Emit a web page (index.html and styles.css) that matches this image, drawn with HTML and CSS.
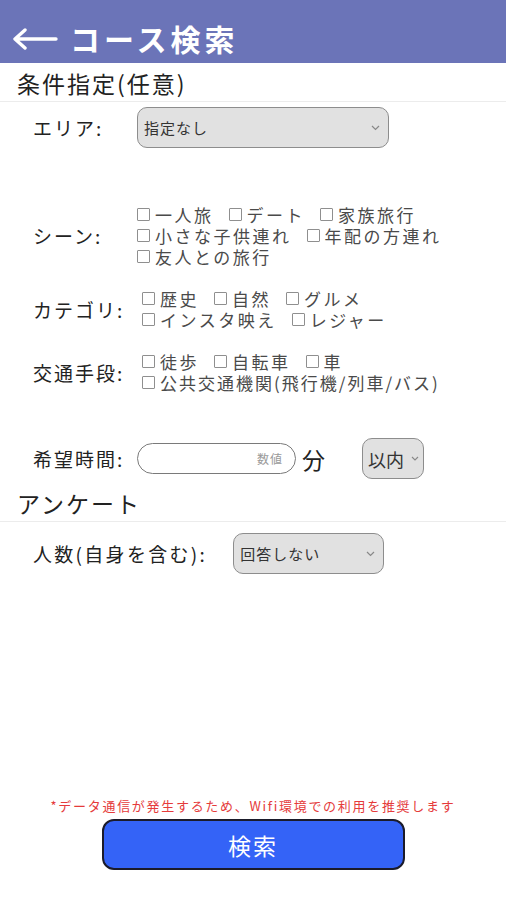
FILE: index.html
```html
<!DOCTYPE html>
<html lang="ja">
<head>
<meta charset="utf-8">
<title>コース検索</title>
<link rel="stylesheet" href="styles.css">
</head>
<body>
<div class="page">
  <header class="header">
    <svg class="back" width="46" height="22" viewBox="0 0 46 22"><path d="M44 11H4M13 2L3 11L13 20" fill="none" stroke="#fff" stroke-width="3.4" stroke-linecap="round" stroke-linejoin="round"/></svg>
    <h1 class="title">コース検索</h1>
  </header>

  <div class="section-title">条件指定(任意)</div>

  <div class="row row-area">
    <div class="label w104">エリア:</div>
    <div class="select select-area"><span>指定なし</span><svg class="chev" width="9" height="6" viewBox="0 0 9 6"><path d="M1 1l3.5 3.5L8 1" fill="none" stroke="#888" stroke-width="1.2"/></svg></div>
  </div>

  <div class="row row-scene">
    <div class="label w104">シーン:</div>
    <div class="checks">
      <div class="line"><span class="cb"><i class="box"></i>一人旅</span><span class="cb"><i class="box"></i>デート</span><span class="cb"><i class="box"></i>家族旅行</span></div>
      <div class="line"><span class="cb"><i class="box"></i>小さな子供連れ</span><span class="cb"><i class="box"></i>年配の方連れ</span></div>
      <div class="line"><span class="cb"><i class="box"></i>友人との旅行</span></div>
    </div>
  </div>

  <div class="row row-cat">
    <div class="label w109">カテゴリ:</div>
    <div class="checks">
      <div class="line"><span class="cb"><i class="box"></i>歴史</span><span class="cb"><i class="box"></i>自然</span><span class="cb"><i class="box"></i>グルメ</span></div>
      <div class="line"><span class="cb"><i class="box"></i>インスタ映え</span><span class="cb"><i class="box"></i>レジャー</span></div>
    </div>
  </div>

  <div class="row row-cat">
    <div class="label w109">交通手段:</div>
    <div class="checks">
      <div class="line"><span class="cb"><i class="box"></i>徒歩</span><span class="cb"><i class="box"></i>自転車</span><span class="cb"><i class="box"></i>車</span></div>
      <div class="line"><span class="cb tight"><i class="box"></i>公共交通機関(飛行機/列車/バス)</span></div>
    </div>
  </div>

  <div class="row row-time">
    <div class="label w104">希望時間:</div>
    <div class="input"><span>数値</span></div>
    <div class="unit">分</div>
    <div class="select select-within"><span>以内</span><svg class="chev" width="8" height="5" viewBox="0 0 8 5"><path d="M1 1l3 3l3-3" fill="none" stroke="#888" stroke-width="1.1"/></svg></div>
  </div>

  <div class="section-title survey">アンケート</div>

  <div class="row row-people">
    <div class="label people-label">人数(自身を含む):</div>
    <div class="select select-people"><span>回答しない</span><svg class="chev" width="9" height="6" viewBox="0 0 9 6"><path d="M1 1l3.5 3.5L8 1" fill="none" stroke="#888" stroke-width="1.2"/></svg></div>
  </div>

  <footer class="footer">
    <p class="note">*データ通信が発生するため、Wifi環境での利用を推奨します</p>
    <button class="search">検索</button>
  </footer>
</div>
</body>
</html>
```

FILE: styles.css
```css
* { box-sizing: border-box; }
html, body { margin: 0; padding: 0; background: #fff; }
body {
  font-family: "Noto Sans CJK JP", "Noto Sans", sans-serif;
  color: #222;
}
.page {
  width: 506px;
  min-height: 900px;
  display: flex;
  flex-direction: column;
}
.header {
  height: 63px;
  background: #6b74b8;
  display: flex;
  align-items: center;
  padding: 12px 0 0 12px;
}
.back { flex: none; margin-right: 12px; margin-top: 2px; }
.title {
  margin: 0;
  color: #fff;
  font-size: 30px;
  font-weight: 700;
  letter-spacing: 4px;
  line-height: 1.2;
}
.section-title {
  height: 39px;
  padding: 2px 0 0 17px;
  font-size: 23px;
  letter-spacing: 2px;
  line-height: 36px;
  color: #222;
  border-bottom: 1px solid #ececec;
}
.survey { margin-top: 4px; }
.row {
  display: flex;
  align-items: center;
  padding-left: 33px;
}
.label {
  flex: none;
  font-size: 19px;
  letter-spacing: 2px;
  color: #222;
}
.w104 { width: 104px; }
.w109 { width: 109px; }
.people-label { margin-right: 26px; letter-spacing: 2.3px; }
.row-area { margin-top: 5px; }
.row-scene { margin-top: 56px; }
.row-cat { margin-top: 21px; }
.row-time { margin-top: 45px; }
.row-people { margin-top: 11px; }

.select {
  height: 41px;
  display: flex;
  align-items: center;
  background: #e1e1e1;
  border: 1px solid #8d8d8d;
  border-radius: 10px;
  padding: 0 8px 0 6px;
  font-size: 15px;
  letter-spacing: 1px;
  color: #333;
}
.select .chev { margin-left: auto; flex: none; }
.select-area { width: 252px; }
.select-people { width: 151px; }
.select-within {
  width: 62px;
  margin-left: 37px;
  padding: 0 4px 0 5px;
  font-size: 18px;
  letter-spacing: 0;
}

.checks { display: flex; flex-direction: column; }
.line {
  display: flex;
  gap: 15px;
  height: 21px;
  align-items: center;
}
.cb {
  display: flex;
  align-items: center;
  height: 21px;
  font-size: 17px;
  letter-spacing: 2.5px;
  color: #4a4a4a;
  line-height: 21px;
  white-space: nowrap;
}
.cb.tight { letter-spacing: 2px; }
.box {
  display: block;
  width: 13px;
  height: 13px;
  border: 1px solid #8f8f8f;
  border-radius: 1px;
  margin-right: 5px;
  flex: none;
}

.input {
  width: 159px;
  height: 31px;
  border: 1px solid #7a7a7a;
  border-radius: 16px;
  background: #fff;
  display: flex;
  align-items: center;
  justify-content: flex-end;
  padding-right: 12px;
  font-size: 12px;
  letter-spacing: 1px;
  color: #9a9a9a;
}
.unit {
  margin-left: 6px;
  font-size: 23px;
  color: #222;
}

.footer {
  margin-top: auto;
  padding-bottom: 30px;
  display: flex;
  flex-direction: column;
  align-items: center;
}
.note {
  margin: 0;
  font-size: 13px;
  letter-spacing: 1.7px;
  line-height: 18px;
  color: #e53b3b;
}
.search {
  margin-top: 4px;
  width: 303px;
  height: 51px;
  background: #3463f7;
  border: 2px solid #1b1b2a;
  border-radius: 12px;
  color: #fff;
  font-family: "Noto Sans CJK JP", "Noto Sans", sans-serif;
  font-size: 23px;
  letter-spacing: 2px;
  padding: 0;
}
```
